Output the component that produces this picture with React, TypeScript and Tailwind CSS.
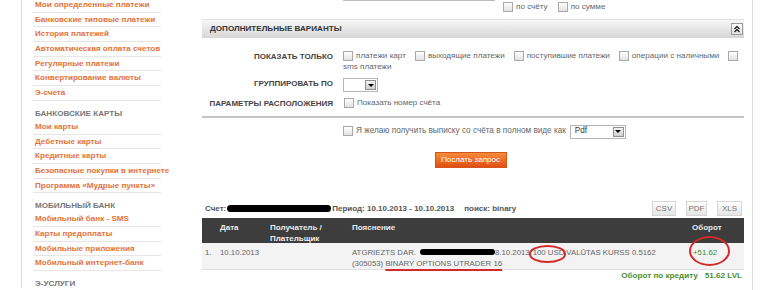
import type { ReactNode } from 'react';

const linksA = [
  'Мои определенные платежи',
  'Банковские типовые платежи',
  'История платежей',
  'Автоматическая оплата счетов',
  'Регулярные платежи',
  'Конвертирование валюты',
  'Э-счета',
];
const linksB = [
  'Мои карты',
  'Дебетные карты',
  'Кредитные карты',
  'Безопасные покупки в интернете',
  'Программа «Мудрые пункты»',
];
const linksC = [
  'Мобильный банк - SMS',
  'Карты предоплаты',
  'Мобильные приложения',
  'Мобильный интернет-банк',
];

const SideLink = ({ label }: { label: string }) => (
  <div className="h-[14.7px] w-[128px] border-b border-[#e6e6e6] pl-[2px] text-[8.1px] font-bold leading-[14px] text-[#e2733a] whitespace-nowrap">
    {label}
  </div>
);

const SideHeading = ({ label }: { label: string }) => (
  <div className="mt-[6px] h-[13px] pl-[2px] text-[8.1px] font-bold leading-[13px] text-[#777]">{label}</div>
);

const Box = ({ className = '' }: { className?: string }) => (
  <span
    className={`inline-block h-[10px] w-[10px] shrink-0 border border-[#a9a9a9] bg-gradient-to-b from-white to-[#e2e2e2] ${className}`}
  />
);

const Check = ({ label, className = '' }: { label?: string; className?: string }) => (
  <span className={`inline-flex items-center gap-[3px] ${className}`}>
    <Box />
    {label && <span>{label}</span>}
  </span>
);

const Select = ({ value, w }: { value: string; w: string }) => (
  <span className={`inline-flex h-[14px] items-center justify-between border border-[#b5b5b5] bg-white pl-[4px] pr-[1px] ${w}`}>
    <span className="text-[8.2px] text-[#333]">{value}</span>
    <span className="flex h-[10px] w-[11px] items-center justify-center border border-[#8f8f8f] bg-gradient-to-b from-[#f2f2f2] to-[#cfcfcf]">
      <span className="h-0 w-0 border-x-[3px] border-t-[3px] border-x-transparent border-t-black" />
    </span>
  </span>
);

const FormRow = ({ label, children, className = '' }: { label: string; children: ReactNode; className?: string }) => (
  <div className={`flex items-start ${className}`}>
    <div className="w-[131px] shrink-0 whitespace-nowrap text-right text-[8px] font-bold leading-[13px] text-[#444]">{label}</div>
    <div className="ml-[10px] flex-1 text-[8.1px] leading-[11px] text-[#666]">{children}</div>
  </div>
);

const Sidebar = () => (
  <aside className="w-[202px] shrink-0 pl-[21px]">
    <div className="h-[290px] border-l border-[#d9d9d9] pl-[11px]">
      <div className="-mt-[2px]">
        {linksA.map((l) => (
          <SideLink key={l} label={l} />
        ))}
        <SideHeading label="БАНКОВСКИЕ КАРТЫ" />
        {linksB.map((l) => (
          <SideLink key={l} label={l} />
        ))}
        <SideHeading label="МОБИЛЬНЫЙ БАНК" />
        {linksC.map((l) => (
          <SideLink key={l} label={l} />
        ))}
        <SideHeading label="Э-УСЛУГИ" />
      </div>
    </div>
  </aside>
);

const App = () => {
  return (
    <div className="flex h-[290px] w-[766px] overflow-hidden bg-white font-['Liberation_Sans',Arial,sans-serif]">
      <Sidebar />

      <main className="h-[290px] w-[551px] shrink-0 border-r border-[#dcdcdc] pr-[8px]">
        {/* top filter remainder */}
        <div className="-mt-[19px] h-[20px] pl-[141px]">
          <div className="h-[20px] w-[152px] border border-[#bdbdbd]" />
        </div>
        <div className="flex h-[13px] items-center pl-[301px] text-[8.1px] text-[#666]">
          <Check label="по счёту" />
          <Check label="по сумме" className="ml-[10px]" />
        </div>

        {/* options header */}
        <div className="mt-[5px] flex h-[19px] items-center justify-between border-t border-[#e0e0e0] bg-gradient-to-b from-[#f7f7f7] to-[#d6d6d6] pl-[8px] pr-[1px]">
          <span className="text-[8.1px] font-bold text-[#333]">ДОПОЛНИТЕЛЬНЫЕ ВАРИАНТЫ</span>
          <span className="flex h-[12px] w-[12px] items-center justify-center border border-[#9a9a9a] bg-gradient-to-b from-white to-[#e0e0e0]">
            <svg width="8" height="8" viewBox="0 0 8 8">
              <path d="M1.5 4 L4 1.5 L6.5 4 M1.5 7 L4 4.5 L6.5 7" stroke="#222" strokeWidth="1.3" fill="none" />
            </svg>
          </span>
        </div>

        <FormRow label="ПОКАЗАТЬ ТОЛЬКО" className="mt-[12px]">
          <div className="flex items-center whitespace-nowrap">
            <Check label="платежи карт" />
            <Check label="выходящие платежи" className="ml-[9px]" />
            <Check label="поступившие платежи" className="ml-[9px]" />
            <Check label="операции с наличными" className="ml-[9px]" />
            <Check className="ml-[9px]" />
          </div>
          <div>sms платежи</div>
        </FormRow>

        <FormRow label="ГРУППИРОВАТЬ ПО" className="mt-[5px] items-center">
          <Select value="" w="w-[35px]" />
        </FormRow>

        <FormRow label="ПАРАМЕТРЫ РАСПОЛОЖЕНИЯ" className="mt-[5px] items-center">
          <Check label="Показать номер счёта" className="ml-[1px]" />
        </FormRow>

        <div className="mt-[5px] h-[2px] bg-[#c4c4c4]" />

        <div className="mt-[7px] flex items-center pl-[141px] text-[8.2px] text-[#666]">
          <Check label="Я желаю получить выписку со счёта в полном виде как" />
          <span className="ml-[4px]">
            <Select value="Pdf" w="w-[56px]" />
          </span>
        </div>

        <div className="mt-[13px] flex justify-center pr-[5px]">
          <button className="h-[16px] w-[72px] border border-[#d2561c] bg-gradient-to-b from-[#f78a3a] to-[#e04e12] text-[8.1px] leading-[14px] text-white">
            Послать запрос
          </button>
        </div>

        {/* statement */}
        <div className="mt-[33px] flex h-[16px] items-center justify-between pl-[3px] pr-[2px]">
          <div className="flex items-center whitespace-nowrap text-[8px] font-bold text-[#555]">
            <span>Счет:</span>
            <span className="mx-[1px] inline-block h-[7px] w-[104px] rounded-full bg-black" />
            <span>Период: 10.10.2013 - 10.10.2013</span>
            <span className="ml-[10px]">поиск: binary</span>
          </div>
          <div className="flex gap-[10px] text-[8px] text-[#777]">
            <span className="flex h-[15px] w-[24px] items-center justify-center border border-[#d5d5d5] bg-gradient-to-b from-white to-[#e4e4e4]">CSV</span>
            <span className="flex h-[15px] w-[21px] items-center justify-center border border-[#d5d5d5] bg-gradient-to-b from-white to-[#e4e4e4]">PDF</span>
            <span className="flex h-[15px] w-[25px] items-center justify-center border border-[#d5d5d5] bg-gradient-to-b from-white to-[#e4e4e4]">XLS</span>
          </div>
        </div>

        <div className="mt-[1px] flex h-[25px] bg-[#3d3d3d] pt-[4px] text-[8px] font-bold leading-[11px] text-[#ececec]">
          <div className="w-[18px]" />
          <div className="w-[50px]">Дата</div>
          <div className="w-[82px]">
            Получатель /
            <br />
            Плательщик
          </div>
          <div className="flex-1">Пояснение</div>
          <div className="w-[52px]">Оборот</div>
        </div>

        <div className="flex h-[27px] border-b border-[#dedede] bg-[#f3f3f3] pt-[4px] text-[7.8px] leading-[11px] text-[#666]">
          <div className="w-[18px] pl-[3px]">1.</div>
          <div className="w-[50px]">10.10.2013</div>
          <div className="w-[82px]" />
          <div className="flex-1 whitespace-nowrap">
            <div className="flex items-center">
              <div className="flex w-[143px] items-center">
                ATGRIEZTS DAR.
                <span className="ml-[4px] inline-block h-[6px] flex-1 rounded-full bg-black" />
              </div>
              8.10.2013
              <span className="relative ml-[3px]">
                100 USD
                <span className="absolute -left-[4px] -right-[2px] -top-[2px] -bottom-[5px] rounded-[50%] border-2 border-[#d42a2a]" />
              </span>
              <span className="ml-[2px]">VALŪTAS KURSS 0.5162</span>
            </div>
            <div>
              (305053){' '}
              <span className="underline decoration-[#d42a2a] decoration-2 underline-offset-[3px]">
                BINARY OPTIONS UTRADER 16
              </span>
            </div>
          </div>
          <div className="w-[52px] pl-[1px]">
            <span className="relative text-[#3e8a2e]">
              +51.62
              <span className="absolute -left-[4px] -right-[13px] -top-[12px] -bottom-[9px] rounded-[50%] border-2 border-[#d42a2a]" />
            </span>
          </div>
        </div>

        <div className="mt-[1px] flex h-[12px] items-center justify-end pr-[2px] text-[8.1px] font-bold text-[#4a8f33]">
          <span>Оборот по кредиту</span>
          <span className="ml-[7px]">51.62 LVL</span>
        </div>
      </main>
    </div>
  );
};

export default App;
